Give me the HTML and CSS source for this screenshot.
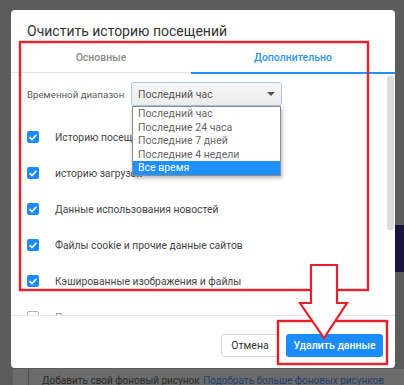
FILE: index.html
```html
<!DOCTYPE html>
<html lang="ru">
<head>
<meta charset="utf-8">
<title>Очистить историю посещений</title>
<link rel="stylesheet" href="styles.css">
</head>
<body>
<div class="screen">
  <div class="stage">
    <div class="dialog">
      <h1 class="title">Очистить историю посещений</h1>
      <div class="tabs">
        <div class="tab">Основные</div>
        <div class="tab active">Дополнительно</div>
      </div>
      <div class="content">
        <div class="pane">
          <div class="range">
            <span class="range-label">Временной диапазон</span>
            <div class="select">
              <span class="select-value">Последний час</span>
              <span class="caret"></span>
              <ul class="menu">
                <li class="menu-item">Последний час</li>
                <li class="menu-item">Последние 24 часа</li>
                <li class="menu-item">Последние 7 дней</li>
                <li class="menu-item">Последние 4 недели</li>
                <li class="menu-item selected">Все время</li>
              </ul>
            </div>
          </div>
          <ul class="checks">
            <li class="check"><span class="box on"><svg viewBox="0 0 12 12" width="12" height="12"><path d="M2.6 6.2 L5 8.5 L9.4 3.8" fill="none" stroke="#fff" stroke-width="1.6"/></svg></span><span class="check-label">Историю посещений</span></li>
            <li class="check"><span class="box on"><svg viewBox="0 0 12 12" width="12" height="12"><path d="M2.6 6.2 L5 8.5 L9.4 3.8" fill="none" stroke="#fff" stroke-width="1.6"/></svg></span><span class="check-label">историю загрузок</span></li>
            <li class="check"><span class="box on"><svg viewBox="0 0 12 12" width="12" height="12"><path d="M2.6 6.2 L5 8.5 L9.4 3.8" fill="none" stroke="#fff" stroke-width="1.6"/></svg></span><span class="check-label">Данные использования новостей</span></li>
            <li class="check"><span class="box on"><svg viewBox="0 0 12 12" width="12" height="12"><path d="M2.6 6.2 L5 8.5 L9.4 3.8" fill="none" stroke="#fff" stroke-width="1.6"/></svg></span><span class="check-label">Файлы cookie и прочие данные сайтов</span></li>
            <li class="check"><span class="box on"><svg viewBox="0 0 12 12" width="12" height="12"><path d="M2.6 6.2 L5 8.5 L9.4 3.8" fill="none" stroke="#fff" stroke-width="1.6"/></svg></span><span class="check-label">Кэшированные изображения и файлы</span></li>
            <li class="check faded"><span class="box off"></span><span class="check-label">Пароли и другие данные для входа</span></li>
          </ul>
        </div>
        <div class="scrollbar"><div class="thumb"></div></div>
      </div>
      <div class="footer">
        <button class="btn cancel">Отмена</button>
        <button class="btn primary">Удалить данные</button>
      </div>
    </div>
    <div class="side"><div class="navy"></div></div>
  </div>
  <div class="strip">
    <span class="strip-edge"></span>
    <span class="strip-text">Добавить свой фоновый рисунок</span>
    <span class="strip-link">Подобрать больше фоновых рисунков</span>
  </div>
  <svg class="annot" width="404" height="385" viewBox="0 0 404 385">
    <rect x="20" y="42" width="348" height="248" fill="none" stroke="#e8202a" stroke-width="2.4"/>
    <rect x="278" y="321" width="109" height="43" fill="none" stroke="#e8202a" stroke-width="2.4"/>
    <polygon points="311,265 337,265 337,303 347,303 324,338 300,303 311,303" fill="#fff" stroke="#e8202a" stroke-width="2.2" stroke-linejoin="miter"/>
  </svg>
</div>
</body>
</html>
```

FILE: styles.css
```css
* { box-sizing: border-box; }
html, body { margin: 0; padding: 0; }
body {
  background: #5c5c5c;
  font-family: Roboto, "Open Sans", sans-serif;
  width: 404px;
  height: 385px;
  overflow: hidden;
}
.screen {
  position: relative;
  width: 404px;
  height: 385px;
}
.stage {
  display: flex;
  padding-top: 10px;
  height: 369px;
}
.dialog {
  margin-left: 11px;
  width: 384px;
  height: 358px;
  background: #fff;
  border-radius: 4px;
  display: flex;
  flex-direction: column;
  overflow: hidden;
}
.title {
  margin: 0;
  padding: 12px 16px 2px;
  font-size: 14px;
  line-height: 18px;
  font-weight: 400;
  color: #333;
  white-space: nowrap;
}
.tabs {
  display: flex;
  border-bottom: 1px solid #e3e3e3;
}
.tab {
  position: relative;
  height: 30px;
  display: flex;
  align-items: center;
  justify-content: center;
  font-size: 10.5px;
  font-weight: 500;
  color: #8a8a8a;
  flex: 0 0 180px;
}
.tab.active {
  flex: 1;
  color: #2b95f0;
}
.tab.active::after {
  content: "";
  position: absolute;
  left: 0;
  right: 0;
  bottom: -2px;
  height: 2px;
  background: #1e90ff;
}
.content {
  flex: 1;
  display: flex;
  min-height: 0;
}
.pane {
  flex: 1;
  padding-left: 16px;
  overflow: hidden;
}
.range {
  display: flex;
  align-items: center;
  margin-top: 9px;
  height: 24px;
}
.range-label {
  width: 104px;
  flex: 0 0 104px;
  font-size: 9.7px;
  color: #5a5a5a;
  white-space: nowrap;
}
.select {
  position: relative;
  width: 151px;
  height: 24px;
  border: 1px solid #a9cbf0;
  border-radius: 3px;
  background: linear-gradient(#f7f7f7, #ededed);
  display: flex;
  align-items: center;
  padding-left: 6px;
  font-size: 10.5px;
  color: #555;
}
.caret {
  margin-left: auto;
  margin-right: 6px;
  width: 0;
  height: 0;
  border-left: 4px solid transparent;
  border-right: 4px solid transparent;
  border-top: 4px solid #555;
}
.menu {
  position: absolute;
  top: 23px;
  left: 0;
  width: 149px;
  margin: 0;
  padding: 0;
  list-style: none;
  background: #fff;
  border: 1px solid #8c8c8c;
  box-shadow: 1px 2px 4px rgba(0,0,0,0.3);
  z-index: 2;
}
.menu-item {
  height: 13.5px;
  line-height: 13.5px;
  padding-left: 5px;
  font-size: 10.5px;
  color: #666;
  white-space: nowrap;
}
.menu-item.selected {
  background: #1e90ff;
  color: #fff;
}
.checks {
  list-style: none;
  margin: 13px 0 0;
  padding: 0;
}
.check {
  height: 36px;
  display: flex;
  align-items: center;
}
.box {
  width: 12px;
  height: 12px;
  border-radius: 2px;
  flex: 0 0 12px;
  margin-right: 16px;
  display: flex;
}
.box.on { background: #1a8cff; }
.box.off { border: 1px solid #b5b5b5; background: #fff; }
.check-label {
  font-size: 10.3px;
  color: #444;
  white-space: nowrap;
}
.check.faded .check-label { color: #8a8a8a; }
.scrollbar {
  width: 7px;
  margin-right: 1px;
  padding-top: 3px;
}
.thumb {
  height: 154px;
  background: #dcdcdc;
  border-radius: 3px;
}
.footer {
  border-top: 1px solid #e6e6e6;
  display: flex;
  justify-content: flex-end;
  gap: 7px;
  padding: 18px 12px 11px;
}
.btn {
  height: 23px;
  border-radius: 3px;
  font-family: inherit;
  font-size: 10.5px;
  padding: 0;
  cursor: pointer;
}
.btn.cancel {
  width: 58px;
  background: #fff;
  border: 1px solid #dadada;
  color: #333;
}
.btn.primary {
  width: 97px;
  background: #1a8cff;
  border: none;
  color: #fff;
  font-weight: 500;
}
.side {
  flex: 1;
}
.navy {
  margin-top: 215px;
  height: 47px;
  background: #1c1440;
}
.strip {
  display: flex;
  align-items: flex-start;
  margin-left: 13px;
  height: 16px;
  background: #6b6b6b;
  font-size: 10px;
  white-space: nowrap;
  overflow: hidden;
}
.strip-edge {
  flex: 0 0 16px;
  height: 16px;
  border-right: 1px solid #4e4e4e;
}
.strip-text {
  padding-left: 13px;
  padding-top: 6px;
  color: #2a2a2a;
}
.strip-link {
  margin-left: auto;
  margin-right: 20px;
  padding-top: 6px;
  color: #1f3f6e;
}
.annot {
  position: absolute;
  left: 0;
  top: 0;
  pointer-events: none;
}
```
